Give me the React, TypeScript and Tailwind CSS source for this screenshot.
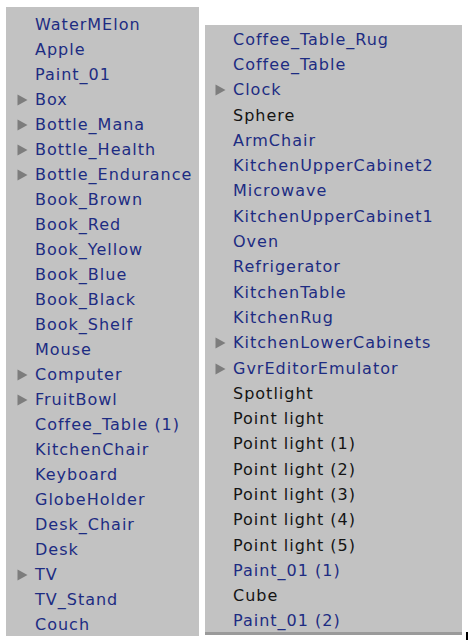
import React from 'react';

type Item = { name: string; kind?: 'prefab' | 'plain'; folded?: boolean };

const left: Item[] = [
  { name: 'WaterMElon' },
  { name: 'Apple' },
  { name: 'Paint_01' },
  { name: 'Box', folded: true },
  { name: 'Bottle_Mana', folded: true },
  { name: 'Bottle_Health', folded: true },
  { name: 'Bottle_Endurance', folded: true },
  { name: 'Book_Brown' },
  { name: 'Book_Red' },
  { name: 'Book_Yellow' },
  { name: 'Book_Blue' },
  { name: 'Book_Black' },
  { name: 'Book_Shelf' },
  { name: 'Mouse' },
  { name: 'Computer', folded: true },
  { name: 'FruitBowl', folded: true },
  { name: 'Coffee_Table (1)' },
  { name: 'KitchenChair' },
  { name: 'Keyboard' },
  { name: 'GlobeHolder' },
  { name: 'Desk_Chair' },
  { name: 'Desk' },
  { name: 'TV', folded: true },
  { name: 'TV_Stand' },
  { name: 'Couch' },
];

const right: Item[] = [
  { name: 'Coffee_Table_Rug' },
  { name: 'Coffee_Table' },
  { name: 'Clock', folded: true },
  { name: 'Sphere', kind: 'plain' },
  { name: 'ArmChair' },
  { name: 'KitchenUpperCabinet2' },
  { name: 'Microwave' },
  { name: 'KitchenUpperCabinet1' },
  { name: 'Oven' },
  { name: 'Refrigerator' },
  { name: 'KitchenTable' },
  { name: 'KitchenRug' },
  { name: 'KitchenLowerCabinets', folded: true },
  { name: 'GvrEditorEmulator', folded: true },
  { name: 'Spotlight', kind: 'plain' },
  { name: 'Point light', kind: 'plain' },
  { name: 'Point light (1)', kind: 'plain' },
  { name: 'Point light (2)', kind: 'plain' },
  { name: 'Point light (3)', kind: 'plain' },
  { name: 'Point light (4)', kind: 'plain' },
  { name: 'Point light (5)', kind: 'plain' },
  { name: 'Paint_01 (1)' },
  { name: 'Cube', kind: 'plain' },
  { name: 'Paint_01 (2)' },
];

const Row: React.FC<{ item: Item; tall?: boolean }> = ({ item, tall }) => (
  <div className={`flex items-center ${tall ? 'h-[25.3px]' : 'h-[25px]'}`}>
    <span className="w-[11px] h-[12px] mr-[7px] flex items-center">
      {item.folded && (
        <svg width="11" height="12" viewBox="0 0 11 12">
          <path d="M0.5 0.5 L10.5 6 L0.5 11.5 Z" fill="#7d7d7d" />
        </svg>
      )}
    </span>
    <span
      className={`whitespace-nowrap text-[16px] leading-none tracking-[1px] ${
        item.kind === 'plain' ? 'text-[#141414]' : 'text-[#1d2c82]'
      }`}
    >
      {item.name}
    </span>
  </div>
);

export default function App() {
  return (
    <div
      className="relative w-[471px] h-[640px] bg-white overflow-hidden flex items-start"
      style={{ fontFamily: '"DejaVu Sans", Verdana, sans-serif' }}
    >
      {/* left hierarchy column */}
      <div className="ml-[6px] mt-[7px] w-[193px] h-[629px] bg-[#c2c2c2] pl-[11px] pt-[5px]">
        {left.map((it, i) => (
          <Row key={i} item={it} />
        ))}
      </div>

      {/* right hierarchy column */}
      <div className="ml-[6px] mt-[25px] w-[257px] h-[610px] bg-[#c2c2c2] border-b-[3px] border-[#9a9a9a] pl-[10px] pt-[2px]">
        {right.map((it, i) => (
          <Row key={i} item={it} tall />
        ))}
      </div>

      <div className="absolute left-[466px] top-[632px] w-[2px] h-[8px] bg-black" />
    </div>
  );
}
